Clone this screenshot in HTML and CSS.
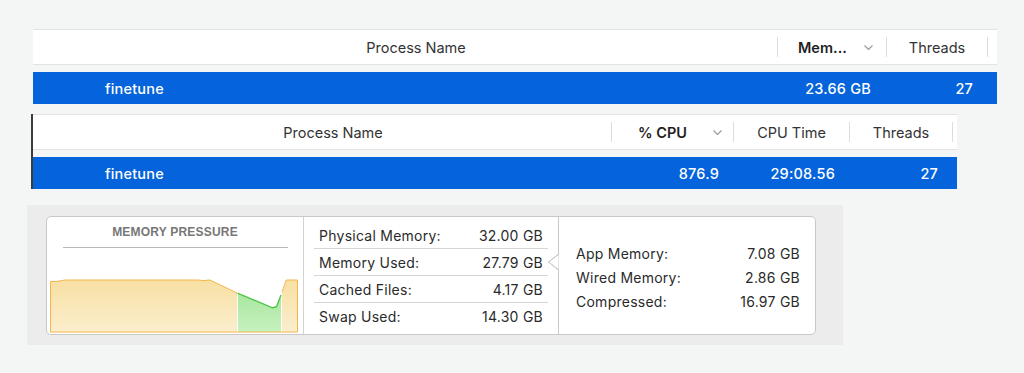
FILE: index.html
```html
<!DOCTYPE html>
<html lang="en">

<head>
  <meta charset="UTF-8">
  <title>Activity Monitor - finetune</title>
  <link rel="stylesheet" href="styles.css">
</head>

<body>
  <div class="page">
    <!-- memory tab -->
    <div class="proc proc-mem">
      <div class="proc-head">
        <div class="hcell name">Process Name</div>
        <div class="hcell sorted">Mem...<svg class="chev" width="9" height="5" viewBox="0 0 9 5"><polyline points="0.5,0.5 4.5,4.5 8.5,0.5" /></svg></div>
        <div class="hcell">Threads</div>
        <div class="hcell"></div>
      </div>
      <div class="proc-row">
        <div class="cell name">finetune</div>
        <div class="cell">23.66 GB</div>
        <div class="cell">27</div>
        <div class="cell"></div>
      </div>
    </div>

    <!-- cpu tab -->
    <div class="proc proc-cpu">
      <div class="proc-head">
        <div class="hcell name">Process Name</div>
        <div class="hcell sorted">% CPU<svg class="chev" width="9" height="5" viewBox="0 0 9 5"><polyline points="0.5,0.5 4.5,4.5 8.5,0.5" /></svg></div>
        <div class="hcell">CPU Time</div>
        <div class="hcell">Threads</div>
        <div class="hcell"></div>
      </div>
      <div class="proc-row">
        <div class="cell name">finetune</div>
        <div class="cell">876.9</div>
        <div class="cell">29:08.56</div>
        <div class="cell">27</div>
        <div class="cell"></div>
      </div>
    </div>

    <!-- memory summary -->
    <div class="mem-panel">
      <div class="mem-box">
        <div class="pressure">
          <div class="pressure-title">MEMORY PRESSURE</div>
          <svg class="pressure-chart" width="252" height="57" viewBox="49 276 252 57">
            <defs>
              <linearGradient id="gOrange" x1="0" y1="0" x2="0" y2="1">
                <stop offset="0" stop-color="#f8e0a4" />
                <stop offset="1" stop-color="#fbeecd" />
              </linearGradient>
              <linearGradient id="gGreen" x1="0" y1="0" x2="0" y2="1">
                <stop offset="0" stop-color="#a9e79f" />
                <stop offset="1" stop-color="#c6f1be" />
              </linearGradient>
            </defs>
            <path class="fill-orange" d="M50.5,332 L50.5,281.6 L57,281.4 L65,280 L198,280 L203,280.6 L210,280 L237,293 L237,332 Z" />
            <path class="fill-green" d="M238,293.3 L272.5,307.8 L276.5,306.8 L281,295 L281,332 L238,332 Z" />
            <path class="fill-orange" d="M282,332 L282,292 L286.3,280 L297.5,280 L297.5,332 Z" />
            <polyline class="line-orange" points="50.5,332 50.5,281.6 57,281.4 65,280 198,280 203,280.6 210,280 237,293" />
            <polyline class="line-green" points="237.5,293.2 272.5,307.8 276.5,306.8 281,295" />
            <polyline class="line-orange" points="282,292 286.3,280 297.5,280 297.5,332 50.5,332" />
          </svg>
        </div>

        <div class="stats">
          <div class="stat"><span>Physical Memory:</span><span>32.00 GB</span></div>
          <div class="stat"><span>Memory Used:</span><span>27.79 GB</span></div>
          <div class="stat"><span>Cached Files:</span><span>4.17 GB</span></div>
          <div class="stat"><span>Swap Used:</span><span>14.30 GB</span></div>
        </div>

        <div class="breakdown">
          <svg class="notch" width="12" height="16" viewBox="0 0 12 16">
            <polygon points="12,0 1.5,8 12,16" fill="#ffffff" />
            <polyline points="11.5,0 1.5,8 11.5,16" />
          </svg>
          <div class="stat"><span>App Memory:</span><span>7.08 GB</span></div>
          <div class="stat"><span>Wired Memory:</span><span>2.86 GB</span></div>
          <div class="stat"><span>Compressed:</span><span>16.97 GB</span></div>
        </div>
      </div>
    </div>
  </div>
</body>

</html>
```

FILE: styles.css
```css
body {
  margin: 0;
  background-color: #f4f5f5;
  font-family: Inter, "Liberation Sans", sans-serif;
  color: #2b2b2b;
}
.page {
  padding-top: 29px;
}

/* process tables */
.proc {
  margin-left: 33px;
}
.proc-mem {
  width: 964px;
}
.proc-cpu {
  margin-top: 10px;
  margin-left: 31px;
  width: 924px;
  border-left: 2px solid #3b3b3b;
}
.proc-head {
  display: grid;
  align-items: center;
  height: 34px;
  background-color: #ffffff;
  border-top: 1px solid #e2e2e2;
  border-bottom: 1px solid #e2e2e2;
  font-size: 14.5px;
  color: #333333;
}
.proc-row {
  display: grid;
  align-items: center;
  margin-top: 7px;
  height: 32px;
  background-color: #0563db;
  color: #ffffff;
  font-size: 14.5px;
  font-weight: 500;
  letter-spacing: 0.2px;
}
.proc-mem .proc-head,
.proc-mem .proc-row {
  grid-template-columns: 744px 109px 101px 1fr;
}
.proc-cpu .proc-head,
.proc-cpu .proc-row {
  grid-template-columns: 578px 122px 116px 103px 1fr;
}
.hcell {
  display: flex;
  align-items: center;
  justify-content: center;
  height: 20px;
  white-space: nowrap;
}
.hcell + .hcell {
  border-left: 1px solid #dcdcdc;
}
.hcell.name {
  padding-left: 22px;
}
.hcell.sorted {
  justify-content: flex-start;
  font-weight: 600;
  color: #1f1f1f;
}
.proc-mem .hcell.sorted {
  padding: 0 13px 0 20px;
}
.proc-cpu .hcell.sorted {
  padding: 0 11px 0 26px;
}
.chev {
  margin-left: auto;
  fill: none;
  stroke: #9d9d9d;
  stroke-width: 1.2;
}
.cell {
  text-align: right;
  padding-right: 14px;
  white-space: nowrap;
}
.cell.name {
  text-align: left;
  padding-left: 72px;
}
.proc-mem .cell:nth-child(2) {
  padding-right: 15px;
}

/* memory panel */
.mem-panel {
  box-sizing: border-box;
  margin: 16px 0 0 27px;
  width: 816px;
  height: 140px;
  padding: 11px 27px 10px 19px;
  background-color: #ececec;
}
.mem-box {
  box-sizing: border-box;
  display: flex;
  height: 100%;
  background-color: #ffffff;
  border: 1px solid #c8c8c8;
  border-radius: 5px;
  font-size: 14px;
  letter-spacing: 0.25px;
  color: #2a2a2a;
}
.pressure {
  display: flex;
  flex-direction: column;
  align-items: center;
  width: 256px;
  border-right: 1px solid #d2d2d2;
}
.pressure-title {
  margin-top: 8px;
  width: 225px;
  padding-bottom: 8px;
  border-bottom: 1px solid #b9b9b9;
  font-family: "Liberation Sans", sans-serif;
  font-weight: bold;
  font-size: 12px;
  line-height: 14px;
  letter-spacing: 0.2px;
  text-align: center;
  color: #777777;
}
.pressure-chart {
  display: block;
  align-self: flex-start;
  margin: 28px 0 0 2px;
}
.fill-orange {
  fill: url(#gOrange);
}
.fill-green {
  fill: url(#gGreen);
}
.line-orange {
  fill: none;
  stroke: #f4b54c;
  stroke-width: 1;
}
.line-green {
  fill: none;
  stroke: #4fc747;
  stroke-width: 1.4;
}
.stats {
  width: 254px;
  padding: 5px 10px 0;
  box-sizing: border-box;
}
.stat {
  display: flex;
  justify-content: space-between;
  align-items: center;
  white-space: nowrap;
}
.stats .stat {
  height: 26px;
  padding: 0 5px;
  border-bottom: 1px solid #d6d6d6;
}
.stats .stat:last-child {
  border-bottom: none;
}
.breakdown {
  position: relative;
  flex: 1;
  display: flex;
  flex-direction: column;
  justify-content: center;
  padding: 3px 15px 0 17px;
  border-left: 1px solid #c8c8c8;
}
.breakdown .stat {
  height: 24px;
}
.notch {
  position: absolute;
  left: -12px;
  top: 37px;
  fill: none;
  stroke: #c8c8c8;
  stroke-width: 1;
}
```
